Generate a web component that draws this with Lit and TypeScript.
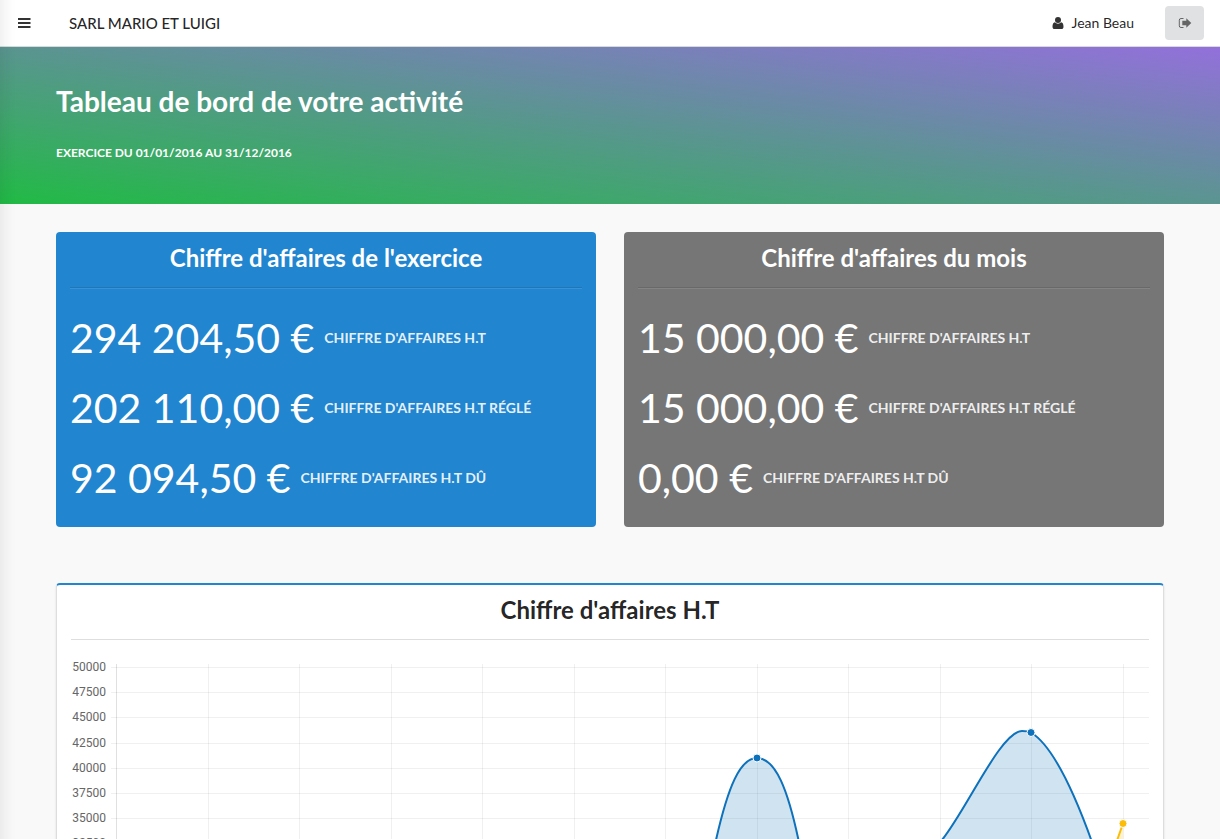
import { LitElement, html, css, svg } from "lit";
import { customElement, property } from "lit/decorators.js";

type Figure = { value: string; label: string };

const EXERCISE: Figure[] = [
  { value: "294 204,50 €", label: "Chiffre d'affaires H.T" },
  { value: "202 110,00 €", label: "Chiffre d'affaires H.T réglé" },
  { value: "92 094,50 €", label: "Chiffre d'affaires H.T dû" },
];

const MONTH: Figure[] = [
  { value: "15 000,00 €", label: "Chiffre d'affaires H.T" },
  { value: "15 000,00 €", label: "Chiffre d'affaires H.T réglé" },
  { value: "0,00 €", label: "Chiffre d'affaires H.T dû" },
];

@customElement("top-bar")
class TopBar extends LitElement {
  static styles = css`
    :host { display: block; }
    .bar {
      display: flex;
      align-items: center;
      box-sizing: border-box;
      height: 47px;
      padding: 0 16px;
      background: #fff;
      border-bottom: 1px solid #d8d9da;
      font-size: 14px;
    }
    .menu {
      display: flex;
      width: 16px;
      height: 32px;
      padding: 0;
      align-items: center;
      justify-content: center;
      border: 0;
      background: none;
      color: #333;
    }
    .company { margin: 0 auto 0 37px; font-size: 15px; line-height: 20px; color: rgba(0, 0, 0, 0.87); font-weight: 500; }
    .user { display: flex; align-items: center; gap: 6px; color: rgba(0, 0, 0, 0.87); text-decoration: none; line-height: 20px; margin-right: 31px; }
    .logout {
      display: flex;
      align-items: center;
      justify-content: center;
      width: 39px;
      height: 34px;
      padding: 0;
      border: 0;
      border-radius: 4px;
      background: #e0e1e2;
      color: rgba(0, 0, 0, 0.55);
    }
    svg { display: block; fill: currentColor; }
    .person { color: #333; }
  `;
  render() {
    return html`
      <header class="bar">
        <button class="menu" aria-label="Menu">
          <svg width="14" height="14" viewBox="0 0 14 14"><path d="M1 2h12.500v2H1zM1 6h12.500v2H1zM1 10h12.500v2H1z" /></svg>
        </button>
        <p class="company">SARL MARIO ET LUIGI</p>
        <a class="user" href="#compte">
          <svg class="person" width="14" height="14" viewBox="0 0 14 14">
            <circle cx="7" cy="4" r="3" />
            <path d="M3.900 6.200C2.300 6.500 1.500 8 1.500 10.700c0 1.400.8 2.300 2 2.300h7c1.200 0 2-.9 2-2.300 0-2.700-.8-4.200-2.400-4.500a4 4 0 0 1-6.200 0z" />
          </svg>
          Jean Beau
        </a>
        <button class="logout" aria-label="Déconnexion">
          <svg width="14" height="14" viewBox="0 0 14 14">
            <path d="M5.500 2.500H3A1.700 1.700 0 0 0 1.300 4.200v5.600A1.700 1.700 0 0 0 3 11.500h2.500" fill="none" stroke="currentColor" stroke-width="1" />
            <path d="M4.300 4.700h4V2.300L13.300 7 8.300 11.700V9.300h-4z" />
          </svg>
        </button>
      </header>
    `;
  }
}

@customElement("figure-card")
class FigureCard extends LitElement {
  @property() heading = "";
  @property() tone = "blue";
  @property({ attribute: false }) figures: Figure[] = [];
  static styles = css`
    :host { display: block; }
    .card { box-sizing: border-box; height: 100%; padding: 14px; border-radius: 4px; color: #fff; }
    .blue { background: #2185d0; }
    .grey { background: #767676; }
    h2 { margin: 0; font-size: 24px; line-height: 24px; font-weight: 700; text-align: center; }
    hr { height: 0; margin: 17px 0 14px; border: 0; border-top: 1px solid rgba(34, 36, 38, 0.15); border-bottom: 1px solid rgba(255, 255, 255, 0.1); }
    dl { margin: 0; }
    .row { display: flex; align-items: center; height: 70px; gap: 10px; }
    dd { order: -1; margin: 0; font-size: 41px; line-height: 42px; }
    dt { font-size: 14px; line-height: 20px; font-weight: 700; text-transform: uppercase; color: rgba(255, 255, 255, 0.9); }
  `;
  render() {
    return html`
      <section class="card ${this.tone}">
        <h2>${this.heading}</h2>
        <hr />
        <dl>
          ${this.figures.map((f) => html`<div class="row"><dt>${f.label}</dt><dd>${f.value}</dd></div>`)}
        </dl>
      </section>
    `;
  }
}

@customElement("revenue-chart")
class RevenueChart extends LitElement {
  static styles = css`
    :host { display: block; }
    svg { display: block; width: 100%; height: auto; }
    text { font-family: "Roboto", sans-serif; font-size: 12px; fill: #666; text-anchor: end; }
    .grid { stroke: rgba(0, 0, 0, 0.06); }
    .axis { stroke: rgba(0, 0, 0, 0.12); }
    .line { fill: none; stroke-width: 2; }
    .blue { stroke: #0d71bb; }
    .blue-area { fill: rgba(13, 113, 187, 0.2); }
    .yellow { stroke: #fbbd08; }
    .yellow-area { fill: rgba(251, 189, 8, 0.2); }
    .dot { stroke: #fff; stroke-width: 1; }
    .blue-dot { fill: #0d71bb; }
    .yellow-dot { fill: #fbbd08; }
  `;
  render() {
    const top = 13.5;
    const bottom = 517.5;
    const rows = Array.from({ length: 21 }, (_, i) => ({
      label: 50000 - i * 2500,
      y: Math.round(top + (i * (bottom - top)) / 20 - 0.5) + 0.5,
    }));
    const cols = Array.from({ length: 11 }, (_, i) => Math.round((i + 1) * 91.5 + 45) + 0.5);
    const aug =
      "M594.500 480C618 350 640 208 645 186C657 133 669 104 686 104C705 104 717 137 727.500 186C737 220 756 350 777.500 370";
    const nov =
      "M777.500 370C805 310 838 225 871 186C896 155 930 77 951 77C955 77 957 77 960 78.500C984 93 1007 149 1021 188C1036 230 1045 330 1052 400";
    const dec = "M960 517.500C985 500 1020 270 1045.500 188L1052 169.500";
    return html`
      <svg viewBox="0 0 1078 540" role="img" aria-label="Chiffre d'affaires H.T par mois">
        ${rows.map(
          (r) => svg`<text x="35" y=${r.y + 3.5}>${r.label}</text><path class="grid" d="M40 ${r.y}H1078" />`,
        )}
        <path class="axis" d="M45.500 10V517.500" />
        ${cols.map((x) => svg`<path class="grid" d="M${x} 10V527.500" />`)}
        <path class="yellow-area" d="${dec}V517.500z" />
        <path class="line yellow" d=${dec} />
        <circle class="dot yellow-dot" cx="1052" cy="169.500" r="4" />
        <path class="blue-area" d="${aug}V517.500H594.500z" />
        <path class="blue-area" d="${nov}V517.500H777.500z" />
        <path class="line blue" d=${aug} />
        <path class="line blue" d=${nov} />
        <circle class="dot blue-dot" cx="686" cy="104" r="4" />
        <circle class="dot blue-dot" cx="960" cy="78.500" r="4" />
      </svg>
    `;
  }
}

@customElement("app-root")
class AppRoot extends LitElement {
  static styles = css`
    :host {
      display: block;
      min-height: 100vh;
      background: #f9f9f9;
      font-family: "Lato", "Liberation Sans", sans-serif;
      color: rgba(0, 0, 0, 0.87);
    }
    .edge {
      position: fixed;
      top: -20px;
      bottom: -20px;
      left: -10px;
      width: 10px;
      box-shadow: 0 0 16px rgba(34, 36, 38, 0.15);
      z-index: 2;
    }
    .hero {
      padding: 36px 56px 42px;
      color: #fff;
      background: linear-gradient(to top right, #21ba45, #9370db);
    }
    .hero h1 { margin: 0; font-size: 28px; line-height: 36px; font-weight: 700; }
    .hero p { margin: 25px 0 0; font-size: 12px; line-height: 18px; font-weight: 700; text-transform: uppercase; }
    main { padding: 28px 56px; }
    .cards { display: grid; grid-template-columns: 1fr 1fr; gap: 28px; }
    .chart {
      margin-top: 56px;
      padding: 13px 14px 14px;
      background: #fff;
      border: 1px solid rgba(34, 36, 38, 0.15);
      border-top: 2px solid #2185d0;
      border-radius: 4px;
      box-shadow: 0 1px 2px rgba(34, 36, 38, 0.15);
    }
    .chart h2 { margin: 0; font-size: 24px; line-height: 24px; font-weight: 700; text-align: center; }
    .chart hr { height: 0; margin: 17px 0 14px; border: 0; border-top: 1px solid rgba(34, 36, 38, 0.15); }
  `;
  render() {
    return html`
      <top-bar></top-bar>
      <div class="hero">
        <h1>Tableau de bord de votre activité</h1>
        <p>Exercice du 01/01/2016 au 31/12/2016</p>
      </div>
      <main>
        <div class="cards">
          <figure-card heading="Chiffre d'affaires de l'exercice" tone="blue" .figures=${EXERCISE}></figure-card>
          <figure-card heading="Chiffre d'affaires du mois" tone="grey" .figures=${MONTH}></figure-card>
        </div>
        <section class="chart">
          <h2>Chiffre d'affaires H.T</h2>
          <hr />
          <revenue-chart></revenue-chart>
        </section>
      </main>
      <div class="edge"></div>
    `;
  }
}
